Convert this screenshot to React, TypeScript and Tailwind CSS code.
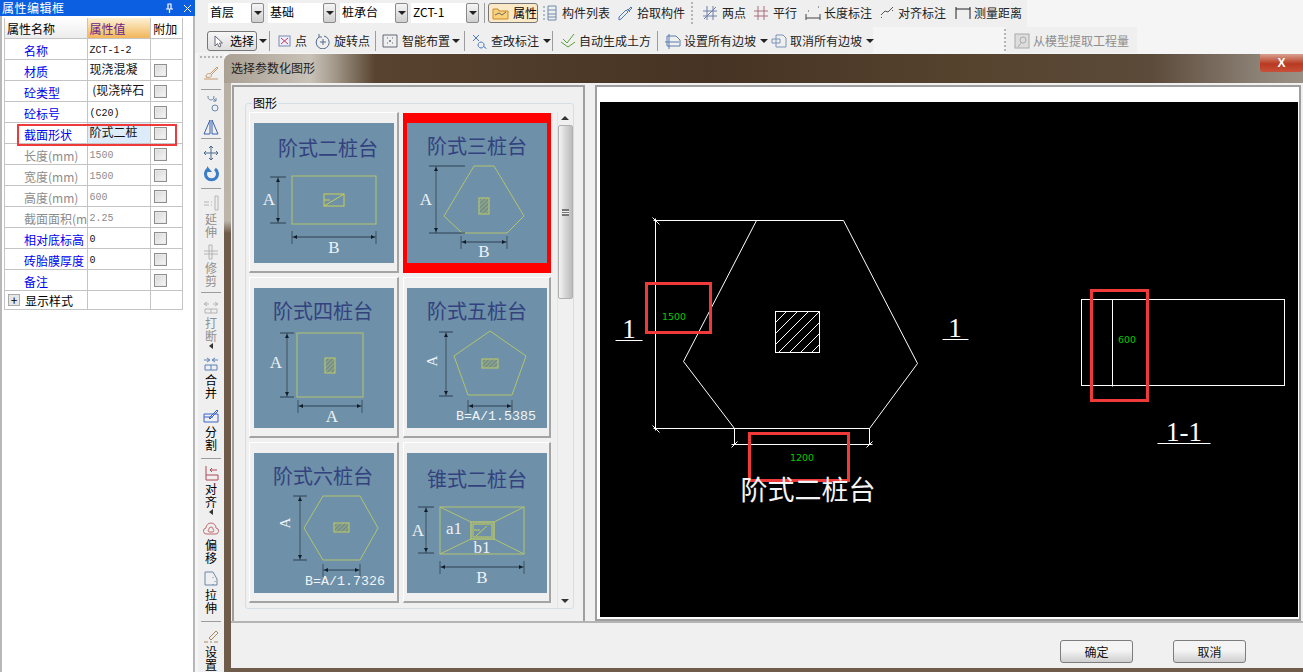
import React from "react";

const cjk = "font-['Noto_Sans_CJK_SC',sans-serif]";

type Row = { name: string; value?: string; tone: "blue" | "gray"; mono?: boolean; check?: boolean; selected?: boolean };

const rows: Row[] = [
  { name: "名称", value: "ZCT-1-2", tone: "blue", mono: true },
  { name: "材质", value: "现浇混凝", tone: "blue", check: true },
  { name: "砼类型", value: " (现浇碎石", tone: "blue", check: true },
  { name: "砼标号", value: "(C20)", tone: "blue", mono: true, check: true },
  { name: "截面形状", value: "阶式二桩", tone: "blue", check: true, selected: true },
  { name: "长度(mm)", value: "1500", tone: "gray", mono: true, check: true },
  { name: "宽度(mm)", value: "1500", tone: "gray", mono: true, check: true },
  { name: "高度(mm)", value: "600", tone: "gray", mono: true, check: true },
  { name: "截面面积(m", value: "2.25", tone: "gray", mono: true, check: true },
  { name: "相对底标高", value: "0", tone: "blue", mono: true, check: true },
  { name: "砖胎膜厚度", value: "0", tone: "blue", mono: true, check: true },
  { name: "备注", tone: "blue", check: true },
];

function Check() {
  return <span className="block h-[13px] w-[13px] border border-[#8f8f8f] bg-[linear-gradient(135deg,#d8d8d8,#f6f6f6)] shadow-[inset_0_0_0_1px_#e8e8e8]" />;
}

function PropertyPanel() {
  return (
    <aside className="flex h-full w-[195px] shrink-0 flex-col bg-white">
      <div className="flex h-[16px] shrink-0 items-center bg-[#0b5fe0] pl-[2px] text-[12px] leading-[16px] tracking-[0.5px] text-white">
        <span className="whitespace-nowrap">属性编辑框</span>
        <svg width="9" height="10" viewBox="0 0 9 10" className="ml-[100px]" fill="none" stroke="white" strokeWidth="1.2">
          <path d="M2.5 1h4M3 1v5M6 1v5M1 6h7M4.5 6v4" />
        </svg>
        <svg width="9" height="9" viewBox="0 0 9 9" className="ml-[9px]" fill="none" stroke="white">
          <path d="M1 1l7 7M8 1l-7 7" />
        </svg>
      </div>
      <div className="relative flex-1 border-l-2 border-r-2 border-l-[#b8b8b8] border-r-[#b8b8b8] pl-[2px] pt-[2px]">
        <div className="w-[179px] border-l border-[#c4c4c4] text-[12px]">
          <div className="flex h-[21px] border-b border-[#c4c4c4] leading-[22px]">
            <div className="w-[83px] border-r border-[#c4c4c4] bg-[linear-gradient(#ffffff,#ececec)] pl-[2px]">属性名称</div>
            <div className="w-[64px] border-r border-[#c4c4c4] bg-[linear-gradient(#fdf1d6,#f3b65a)] pl-[2px] text-[#6b1d86]">属性值</div>
            <div className="w-[32px] border-r border-[#c4c4c4] pl-[2px]">附加</div>
          </div>
          {rows.map((r) => (
            <div key={r.name} className="flex h-[21px] border-b border-[#c4c4c4]">
              <div className={`w-[83px] overflow-hidden whitespace-nowrap border-r border-[#c4c4c4] pl-[19px] leading-[23px] ${r.tone === "blue" ? "text-[#0000ee]" : "text-[#8c8c8c]"}`}>
                {r.name}
              </div>
              <div
                className={`w-[64px] overflow-hidden whitespace-pre border-r border-[#c4c4c4] pl-[2px] ${r.mono ? "font-['Liberation_Mono','Noto_Sans_CJK_SC',monospace] text-[10px] leading-[23px]" : "leading-[18px]"} ${r.tone === "gray" ? "text-[#8c8c8c]" : "text-[#111]"} ${r.selected ? "bg-[#dcecfb]" : ""}`}
              >
                {r.value}
              </div>
              <div className="flex w-[32px] items-center border-r border-[#c4c4c4] pl-[3px]">{r.check && <Check />}</div>
            </div>
          ))}
          <div className="flex h-[19px] border-b border-[#c4c4c4] leading-[19px]">
            <div className="flex w-[83px] items-center border-r border-[#c4c4c4] pl-[3px]">
              <span className="mr-[5px] flex h-[12px] w-[12px] items-center justify-center border border-[#aaa] bg-[#e6e6e6] text-[12px] leading-none text-black">+</span>
              显示样式
            </div>
            <div className="w-[64px] border-r border-[#c4c4c4]" />
            <div className="w-[32px] border-r border-[#c4c4c4]" />
          </div>
        </div>
        <div className="absolute left-[15px] top-[108px] h-[22px] w-[160px] border-[2.5px] border-[#f03a3a]" />
      </div>
    </aside>
  );
}

function Combo({ label, width, ml }: { label: string; width: string; ml: string }) {
  return (
    <div className={`flex h-[20px] items-center ${ml}`}>
      <div className={`${width} h-[20px] bg-white pl-[2px] text-[12px] leading-[18px]`}>{label}</div>
      <div className="flex h-[20px] w-[13px] items-center justify-center rounded-[2px] border border-[#8a8a8a] bg-[linear-gradient(#f5f5f5,#cfcfcf)]">
        <Arrow />
      </div>
    </div>
  );
}

function Arrow() {
  return <span className="block h-0 w-0 border-x-[4px] border-t-[4px] border-x-transparent border-t-[#222]" />;
}

function Sep({ ml = "ml-[4px]" }: { ml?: string }) {
  return <span className={`${ml} h-[20px] w-[1px] shrink-0 bg-[#9c9c9c]`} />;
}

function Grip({ ml }: { ml: string }) {
  return <span className={`${ml} h-[22px] w-[2px] shrink-0 border-l-2 border-dotted border-[#b4b4b4]`} />;
}

function Ico({ d, color = "#4a6aa8", w = 16, fill = "none" }: { d: string; color?: string; w?: number; fill?: string }) {
  return (
    <svg width={w} height="16" viewBox={`0 0 ${w} 16`} fill={fill} stroke={color} strokeWidth="1" className="shrink-0">
      <path d={d} />
    </svg>
  );
}

function Tool({ icon, label, ml, gap = "ml-[3px]", arrow, arrowMl = "ml-[4px]", dim }: { icon: React.ReactNode; label: string; ml: string; gap?: string; arrow?: boolean; arrowMl?: string; dim?: boolean }) {
  return (
    <div className={`flex shrink-0 items-center ${ml} ${dim ? "text-[#8e8e8e]" : "text-[#222]"}`}>
      {icon}
      <span className={`${gap} whitespace-nowrap text-[12px]`}>{label}</span>
      {arrow && (
        <span className={arrowMl}>
          <Arrow />
        </span>
      )}
    </div>
  );
}

function TopBars() {
  return (
    <div className="flex h-[53px] flex-col">
      <div className="flex h-[27px] w-[832px] items-center bg-[#efefef] pb-[1px]">
        <Combo label="首层" width="w-[43px]" ml="ml-[13px]" />
        <Combo label="基础" width="w-[55px]" ml="ml-[4px]" />
        <Combo label="桩承台" width="w-[55px]" ml="ml-[4px]" />
        <Combo label="ZCT-1" width="w-[55px]" ml="ml-[3px]" />
        <Sep ml="ml-[5px]" />
        <div className="ml-[3px] flex h-[20px] w-[50px] items-center rounded-[3px] border border-[#777] bg-[#fbe9c8] pl-[3px] text-[12px]">
          <svg width="17" height="14" viewBox="0 0 17 14">
            <path d="M1 3h5l1 2h9v8H1z" fill="#fbd27a" stroke="#c88a2a" />
            <path d="M3 9l4-2 3 2 4-3" fill="none" stroke="#666" />
          </svg>
          <span className="ml-[4px]">属性</span>
        </div>
        <Tool ml="ml-[3px]" gap="ml-[5px]" label="构件列表" icon={<Ico d="M2 2h2M2 6h2M2 10h2M2 14h2M7 1h8v14H7zM7 5h8M7 9h8M7 12h8" color="#6f8aa8" />} />
        <Tool ml="ml-[8px]" gap="ml-[3px]" label="拾取构件" icon={<Ico d="M1 15l2-1 7-7-2-2-7 7zM9 4l3 3M10 5l3-3 1 1-3 3" color="#4d79b8" />} />
        <Grip ml="ml-[6px]" />
        <Tool ml="ml-[9px]" gap="ml-[4px]" label="两点" icon={<Ico d="M5 1v14M11 1v14M1 6h14M1 11h14M2 14L14 2" color="#6f7fa8" />} />
        <Tool ml="ml-[7px]" gap="ml-[4px]" label="平行" icon={<Ico d="M5 1v14M11 1v14M1 6h14M1 11h14" color="#a86f7f" />} />
        <Tool ml="ml-[8px]" gap="ml-[3px]" label="长度标注" icon={<Ico d="M1 9v6M15 9v6M1 13h14M3 6h1M13 2h1" color="#444" />} />
        <Tool ml="ml-[7px]" gap="ml-[3px]" label="对齐标注" icon={<Ico d="M2 10l4-4 3 1 5-5M2 13l1-1M13 6l1-1" color="#555" />} />
        <Tool ml="ml-[9px]" gap="ml-[3px]" label="测量距离" icon={<Ico d="M1 2v12M15 2v12M1 4h14" color="#222" />} />
      </div>
      <div className="flex h-[26px] items-center">
        <div className="flex h-[26px] w-[678px] items-center bg-[#efefef] pt-[2px]">
          <div className="ml-[12px] flex h-[20px] w-[50px] shrink-0 items-center rounded-[3px] border border-[#777] bg-[linear-gradient(#f6f6f6,#dedede)] pl-[6px] text-[12px]">
            <svg width="9" height="13" viewBox="0 0 9 13">
              <path d="M1 1v10l2.5-2.5L5 12l2-1-1.500-3H8.500z" fill="#fff" stroke="#667" />
            </svg>
            <span className="ml-[7px] whitespace-nowrap">选择</span>
          </div>
          <span className="ml-[2px]">
            <Arrow />
          </span>
          <Sep ml="ml-[2px]" />
          <Tool ml="ml-[7px]" gap="ml-[3px]" label="点" icon={<svg width="15" height="14" viewBox="0 0 15 14" fill="none"><rect x="2" y="2" width="11" height="10" fill="#eef" stroke="#7a8ab0" /><path d="M4 4l7 6M11 4l-7 6" stroke="#c04050" /></svg>} />
          <Tool ml="ml-[7px]" gap="ml-[2px]" label="旋转点" icon={<Ico w={18} d="M5 4a6.500 6.500 0 1 0 5-1M5 1v3h3M6 9h6M9 6v6" color="#556a88" />} />
          <Sep ml="ml-[5px]" />
          <Tool ml="ml-[6px]" gap="ml-[4px]" arrow arrowMl="ml-[2px]" label="智能布置" icon={<Ico d="M1 2h14v12H1zM5 5h1M10 5h1M5 10h1M10 10h1M8 7v2M7 8h2" color="#667" />} />
          <Sep ml="ml-[4px]" />
          <Tool ml="ml-[6px]" gap="ml-[3px]" arrow label="查改标注" icon={<Ico w={17} d="M2 2l6 6M8 2L2 8M10 9a3 3 0 1 0 .1 0M12.500 13.500l3 2" color="#4d79b8" />} />
          <Sep ml="ml-[1px]" />
          <Tool ml="ml-[7px]" gap="ml-[3px]" label="自动生成土方" icon={<Ico d="M1 9l7 5 7-5M3 6l4 4 7-9" color="#5aa03c" />} />
          <Sep ml="ml-[6px]" />
          <Tool ml="ml-[6px]" gap="ml-[3px]" arrow label="设置所有边坡" icon={<Ico w={17} d="M3 3h9l4 4v6H3zM1 9h14M5 1v15" color="#5a7cb0" />} />
          <Tool ml="ml-[3px]" gap="ml-[3px]" arrow label="取消所有边坡" icon={<Ico d="M5 2h7l3 3v9H5zM1 6h8v4H1z" color="#7a93b8" />} />
        </div>
        <Grip ml="ml-[131px]" />
        <div className="flex h-[26px] w-[131px] items-center bg-[#efefef] pl-[8px] pt-[2px]">
          <Tool dim ml="ml-0" gap="ml-[3px]" label="从模型提取工程量" icon={<svg width="16" height="16" viewBox="0 0 16 16" fill="#ddd" stroke="#aaa"><rect x="1" y="1" width="14" height="14" /><circle cx="9" cy="7" r="3" fill="none" /><path d="M7 10l-3 4" /></svg>} />
        </div>
      </div>
    </div>
  );
}

function VTool({ h, icon, label, dim, arrow }: { h: string; icon?: React.ReactNode; label?: string; dim?: boolean; arrow?: boolean }) {
  return (
    <div className={`flex ${h} shrink-0 flex-col items-center pt-[1px] ${dim ? "text-[#909090]" : "text-black"}`}>
      {icon}
      {label && <span className="mt-[2px] w-[12px] text-[12px] leading-[12.500px]">{label}</span>}
      {arrow && <span className="mt-[1px] h-0 w-0 border-y-[3px] border-r-[4px] border-y-transparent border-r-[#333]" />}
    </div>
  );
}

function VSep() {
  return <span className="my-[5px] h-[1px] w-[20px] shrink-0 bg-[#9c9c9c]" />;
}

function SideBar() {
  return (
    <div className="ml-[3px] flex w-[26px] shrink-0 flex-col items-center overflow-hidden bg-[#efefef]">
      <span className="mt-[2px] h-[2px] w-[22px] shrink-0 border-t-2 border-dotted border-[#b4b4b4]" />
      <div className="h-[6px] shrink-0" />
      <VTool h="h-[20px]" icon={<Ico d="M1 14h14M3 12c0-3 2-4 4-3l7-7 1 1-7 7c1 2-1 3-5 2z" color="#c89a70" />} />
      <VSep />
      <VTool h="h-[23px]" icon={<Ico d="M8 4a3 3 0 1 0-.1 0M9 12a3 3 0 1 0 6 0 3 3 0 1 0-6 0M10 2l3 3M13 2v3h-3" color="#6a87a8" />} />
      <VTool h="h-[15px]" icon={<Ico d="M7 1v14H1zM9 1v14h6z" color="#3a62b0" />} />
      <VSep />
      <VTool h="h-[21px]" icon={<Ico d="M8 1v14M1 8h14M6 3l2-2 2 2M6 13l2 2 2-2M3 6L1 8l2 2M13 6l2 2-2 2" color="#4a6a90" />} />
      <VTool h="h-[18px]" icon={<svg width="16" height="16" viewBox="0 0 16 16" fill="none"><path d="M5 3a6 6 0 1 0 7 0" stroke="#3a7cc8" strokeWidth="3" /><path d="M4 0v6h5z" fill="#3a7cc8" /></svg>} />
      <VSep />
      <VTool dim h="h-[44px]" label="延伸" icon={<Ico d="M1 7h5M1 10h5M8 7h1M8 10h1M12 1h3v14h-3z" color="#b4b4b4" />} />
      <div className="h-[5px] shrink-0" />
      <VTool dim h="h-[44px]" label="修剪" icon={<Ico d="M1 7h14M1 10h14M6 1h3v14H6z" color="#b4b4b4" />} />
      <VSep />
      <VTool dim arrow h="h-[53px]" label="打断" icon={<Ico d="M1 5h5M10 5h5M4 3L1 5l3 2M12 3l3 2-3 2M2 10h12v4H2zM8 10v4" color="#b4b4b4" />} />
      <div className="h-[4px] shrink-0" />
      <VTool h="h-[48px]" label="合并" icon={<Ico d="M1 4h5M10 4h5M4 2l3 2-3 2M12 2L9 4l3 2M2 9h12v5H2zM8 9v5" color="#5a80b8" />} />
      <div className="h-[4px] shrink-0" />
      <VTool h="h-[46px]" label="分割" icon={<Ico d="M1 6h14v8H1zM1 9h9M6 10l8-8 1 1-8 8z" color="#3a62c8" />} />
      <VSep />
      <VTool arrow h="h-[54px]" label="对齐" icon={<Ico d="M3 1v14h12v-5H6M3 10h3M7 5h7M9 3L7 5l2 2" color="#b04858" />} />
      <div className="h-[2px] shrink-0" />
      <VTool h="h-[48px]" label="偏移" icon={<Ico d="M4 13a3 3 0 0 1-1-6 5 5 0 0 1 10 0 3 3 0 0 1-1 6zM6 11a2 2 0 0 1 0-3 2 2 0 0 1 4 0 2 2 0 0 1 0 3z" color="#c06a70" />} />
      <div className="h-[2px] shrink-0" />
      <VTool h="h-[46px]" label="拉伸" icon={<Ico d="M2 1h8l4 7v6H2zM10 6v1M12 10v1M10 13v1" color="#6a87a8" />} />
      <VSep />
      <VTool h="h-[44px]" label="设置" icon={<Ico d="M1 14h4M7 14h2M11 14h4M6 10l7-7 2 2-7 7z" color="#a88a60" />} />
    </div>
  );
}

function VDim({ x, y1, y2, l = 7, r = 7 }: { x: number; y1: number; y2: number; l?: number; r?: number }) {
  return (
    <g stroke="#26384a" strokeWidth="0.9" fill="#101c28">
      <line x1={x} y1={y1} x2={x} y2={y2} stroke="#3a4a5a" />
      <line x1={x - l} y1={y1} x2={x + r} y2={y1} />
      <line x1={x - l} y1={y2} x2={x + r} y2={y2} />
      <path d={`M${x} ${y1 + 1}l-2 4h4zM${x} ${y2 - 1}l-2 -4h4z`} stroke="none" />
    </g>
  );
}

function HDim({ y, x1, x2, t = 6, b = 7 }: { y: number; x1: number; x2: number; t?: number; b?: number }) {
  return (
    <g stroke="#26384a" strokeWidth="0.9" fill="#101c28">
      <line x1={x1} y1={y} x2={x2} y2={y} />
      <line x1={x1} y1={y - t} x2={x1} y2={y + b} stroke="#3a4a5a" />
      <line x1={x2} y1={y - t} x2={x2} y2={y + b} stroke="#3a4a5a" />
      <path d={`M${x1 + 1} ${y}l4 -2v4zM${x2 - 1} ${y}l-4 -2v4z`} stroke="none" />
    </g>
  );
}

function Letter({ x, y, c }: { x: number; y: number; c: string }) {
  return (
    <text x={x} y={y} textAnchor="middle" className="fill-[#edf2f6] font-['Liberation_Serif',serif] text-[17px]">
      {c}
    </text>
  );
}

function SideLetter({ x, y }: { x: number; y: number }) {
  return (
    <text x={x} y={y} dy="5" textAnchor="middle" transform={`rotate(-90 ${x} ${y})`} className="fill-[#edf2f6] font-['Liberation_Serif',serif] text-[15px]">
      A
    </text>
  );
}

function Formula({ x, c }: { x: number; c: string }) {
  return (
    <text x={x} y={132} textAnchor="middle" className="fill-[#f0f4f7] font-['Liberation_Mono',monospace] text-[13.300px]">
      {c}
    </text>
  );
}

function Thumb({ title, tx, ty, children }: { title: string; tx: number; ty: number; children: React.ReactNode }) {
  return (
    <svg width="140" height="140" viewBox="0 0 140 140" className="block shrink-0 bg-[#6e90a8]">
      <text x={tx} y={ty + 9} textAnchor="middle" className={`fill-[#33427f] text-[20px] ${cjk}`}>
        {title}
      </text>
      {children}
    </svg>
  );
}

const ln = "#b3c46e";

function Hatch({ x, y, w, h }: { x: number; y: number; w: number; h: number }) {
  const id = `hatch-${x}-${y}`;
  return (
    <>
      <defs>
        <pattern id={id} width="3" height="3" patternUnits="userSpaceOnUse" patternTransform="rotate(45)">
          <rect width="3" height="3" fill="#8aa08c" />
          <line x1="0" y1="0" x2="0" y2="3" stroke="#5f7f80" strokeWidth="1.5" />
        </pattern>
      </defs>
      <rect x={x} y={y} width={w} height={h} fill={`url(#${id})`} stroke={ln} strokeWidth="1.200" />
    </>
  );
}

function Thumbs() {
  return [
    <Thumb key="a" title="阶式二桩台" tx={74} ty={24}>
      <rect x="38" y="53" width="84" height="48" fill="none" stroke={ln} />
      <rect x="70" y="71" width="20" height="12" fill="none" stroke="#c8d050" />
      <path d="M70 83L90 71M70 77h6" stroke="#c8d050" fill="none" />
      <VDim x={24} y1={54} y2={100} l={8} r={8} />
      <HDim y={114} x1={38} x2={122} />
      <Letter x={15} y={82} c="A" />
      <Letter x={80} y={130} c="B" />
    </Thumb>,
    <Thumb key="b" title="阶式三桩台" tx={70} ty={22}>
      <path d="M67 43H87L117 93L100 110H55L37 93Z" fill="none" stroke={ln} />
      <Hatch x={72} y={75} w={10} h={16} />
      <VDim x={29} y1={43} y2={110} r={29} />
      <HDim y={119} x1={54} x2={100} />
      <Letter x={19} y={82} c="A" />
      <Letter x={77} y={134} c="B" />
    </Thumb>,
    <Thumb key="c" title="阶式四桩台" tx={69} ty={22}>
      <rect x="43" y="45" width="66" height="64" fill="none" stroke={ln} />
      <Hatch x={71} y={70} w={10} h={15} />
      <VDim x={33} y1={45} y2={109} />
      <HDim y={118} x1={44} x2={108} />
      <Letter x={22} y={80} c="A" />
      <Letter x={78} y={134} c="A" />
    </Thumb>,
    <Thumb key="d" title="阶式五桩台" tx={70} ty={22}>
      <path d="M83 43L119 68L105 107H61L47 68Z" fill="none" stroke={ln} />
      <Hatch x={75} y={71} w={16} h={9} />
      <VDim x={39} y1={44} y2={108} />
      <HDim y={118} x1={61} x2={105} />
      <SideLetter x={25} y={73} />
      <Formula x={89} c="B=A/1.5385" />
    </Thumb>,
    <Thumb key="e" title="阶式六桩台" tx={69} ty={22}>
      <path d="M69 43H106L124 75L106 107H69L50 75Z" fill="none" stroke={ln} />
      <Hatch x={80} y={70} w={15} h={9} />
      <VDim x={46} y1={43} y2={107} />
      <HDim y={117} x1={69} x2={106} />
      <SideLetter x={31} y={70} />
      <Formula x={91} c="B=A/1.7326" />
    </Thumb>,
    <Thumb key="f" title="锥式二桩台" tx={70} ty={25}>
      <rect x="33" y="54" width="84" height="47" fill="none" stroke={ln} />
      <path d="M33 54L64 69M117 54L87 69M33 101L64 86M117 101L87 86" stroke={ln} fill="none" />
      <rect x="64" y="69" width="23" height="17" fill="none" stroke={ln} strokeWidth="1.500" />
      <rect x="66" y="71" width="19" height="13" fill="none" stroke="#c8d050" />
      <path d="M69 83L80 73M67 77h6" stroke="#c8d050" fill="none" />
      <VDim x={19} y1={54} y2={100} l={8} r={8} />
      <HDim y={114} x1={33} x2={117} />
      <Letter x={11} y={83} c="A" />
      <Letter x={47} y={81} c="a1" />
      <Letter x={75} y={100} c="b1" />
      <Letter x={75} y={130} c="B" />
    </Thumb>,
  ];
}

function ShapeList() {
  const items = Thumbs();
  return (
    <div className="relative ml-[11px] mt-[16px] flex h-[506px] w-[329px] rounded-[3px] border border-[#d3dee6] pl-[3px] pt-[8px]">
      <span className="absolute left-[6px] top-[-8px] bg-[#f0f0f0] px-[1px] text-[12px] leading-[14px]">图形</span>
      <div className="grid grid-cols-[150px_148px] grid-rows-[161px_161px_161px] gap-x-[4px] gap-y-[4px]">
        {items.map((thumb, i) =>
          i === 1 ? (
            <div key={i} className="mt-[1px] bg-[#ff0000] pl-[4px] pt-[10px]">
              {thumb}
            </div>
          ) : (
            <div key={i} className={`border-b-2 border-l border-r-2 border-t border-b-[#a4a4a4] border-l-white border-r-[#a4a4a4] border-t-white pt-[10px] ${i % 2 ? "pl-[3px]" : "pl-[4px]"}`}>
              {thumb}
            </div>
          ),
        )}
      </div>
      <div className="ml-[6px] flex h-[496px] w-[15px] flex-col items-center border-l border-[#e4e4e4]">
        <span className="mt-[4px] h-0 w-0 border-x-[4px] border-b-[4px] border-x-transparent border-b-[#333]" />
        <div className="mt-[5px] flex h-[174px] w-[15px] items-center justify-center rounded-[2px] border border-[#b0b0b0] bg-[linear-gradient(90deg,#f4f4f4,#d2d2d2_55%,#bdbdbd)]">
          <span className="h-[7px] w-[7px] border-y-2 border-[#777] bg-[linear-gradient(#eee_30%,#777_30%,#777_70%,#eee_70%)]" />
        </div>
        <span className="mt-auto mb-[5px] h-0 w-0 border-x-[4px] border-t-[4px] border-x-transparent border-t-[#333]" />
      </div>
    </div>
  );
}

function Drawing() {
  const w = "#ffffff";
  const hatch = [12, 23, 34, 45, 56, 67, 78];
  return (
    <svg viewBox="600 102 698 515" width="698" height="515" className="block bg-black">
      <defs>
        <clipPath id="sq">
          <rect x="775" y="311" width="45" height="41" />
        </clipPath>
      </defs>
      <g fill="none" stroke={w} strokeWidth="1">
        <g transform="translate(0.5 0.5)">
          <path d="M653 220H843M655 218V430M653 428H869M734 428V444M869 428V444M731 444H872" />
          <path d="M756 220L683 361L734 428M843 220L917 363L869 428" />
          <path d="M652 217l7 7M652 425l7 7M731 447l6 -6M866 447l6 -6" />
          <path d="M615 340H642M942 339H968M1157 443H1210M1112 299V386" />
        </g>
        <rect x="775.500" y="311.500" width="44" height="41" />
        <g clipPath="url(#sq)">
          {hatch.map((c) => (
            <line key={c} x1={775 + c} y1={311} x2={775 + c - 41} y2={352} />
          ))}
        </g>
        <rect x="1081.500" y="299.500" width="203" height="86" />
      </g>
      <g fill="none" stroke="#f03a3a" strokeWidth="3">
        <rect x="646.500" y="283.500" width="64" height="49" />
        <rect x="749.500" y="433.500" width="99" height="47" />
        <rect x="1091.500" y="290.500" width="56" height="110" />
      </g>
      <g textAnchor="middle" className="fill-[#00cc00] font-['DejaVu_Sans',sans-serif] text-[9.500px]">
        <text x="674" y="320">1500</text>
        <text x="802" y="461">1200</text>
        <text x="1127" y="343">600</text>
      </g>
      <g textAnchor="middle" className="fill-white font-['Liberation_Serif',serif] text-[27px]">
        <text x="629" y="338">1</text>
        <text x="955" y="337">1</text>
        <text x="1184" y="441">1-1</text>
      </g>
      <text x="808" y="500" textAnchor="middle" className={`fill-[#f4f4f4] text-[27px] ${cjk}`}>
        阶式二桩台
      </text>
    </svg>
  );
}

function FootButton({ label, ml }: { label: string; ml: string }) {
  return (
    <button className={`${ml} h-[23px] w-[73px] rounded-[3px] border border-[#7d7d7d] bg-[linear-gradient(#f4f4f4_45%,#cfcfcf)] text-[12px] text-[#111]`}>
      {label}
    </button>
  );
}

function Dialog() {
  return (
    <section className="flex min-w-0 flex-1 flex-col overflow-hidden rounded-tl-[8px] bg-[linear-gradient(180deg,#b8afa4_0%,#bdb5aa_27%,#6e5b4a_29%,#6e5b4a_100%)] pl-[7px] pb-[4px]">
      <div className="-ml-[7px] flex h-[29px] shrink-0 items-start bg-[linear-gradient(90deg,#aaa094_0%,#c9c2b8_8%,#a89e90_10%,#57432f_14%,#463323_45%,#56442f_70%,#5c4a3a_86%,#8c8276_96%,#9a9084_100%)] pl-[7px] pt-[5px] text-[12px] text-[#1d1d1d]">
        <span>选择参数化图形</span>
        <div className="ml-auto flex h-[18px] w-[43px] -translate-y-[5px] items-center justify-center rounded-b-[3px] bg-[linear-gradient(#d8a090,#b93a20_55%,#c8503a)] font-['Liberation_Sans',sans-serif] text-[12px] font-bold text-white">
          X
        </div>
      </div>
      <div className="flex flex-1 flex-col bg-[#f0f0f0]">
        <div className="flex h-[540px] shrink-0 border-b-2 border-[#b4b4b4] pt-[2px]">
          <div className="ml-[1px] h-[536px] w-[353px] border-2 border-b-0 border-[#9f9f9f]">
            <ShapeList />
          </div>
          <div className="ml-[10px] h-[536px] w-[706px] border-2 border-[#9f9f9f] bg-white pl-[3px] pt-[15px]">
            <Drawing />
          </div>
        </div>
        <div className="flex flex-1 items-start pt-[17px]">
          <FootButton label="确定" ml="ml-[829px]" />
          <FootButton label="取消" ml="ml-[40px]" />
        </div>
      </div>
    </section>
  );
}

export default function App() {
  return (
    <div className={`flex h-[672px] w-[1303px] overflow-hidden bg-[#f5f5f5] text-black ${cjk}`}>
      <PropertyPanel />
      <div className="flex min-w-0 flex-1 flex-col">
        <TopBars />
        <div className="mt-[1px] flex min-h-0 flex-1">
          <SideBar />
          <Dialog />
        </div>
      </div>
    </div>
  );
}
